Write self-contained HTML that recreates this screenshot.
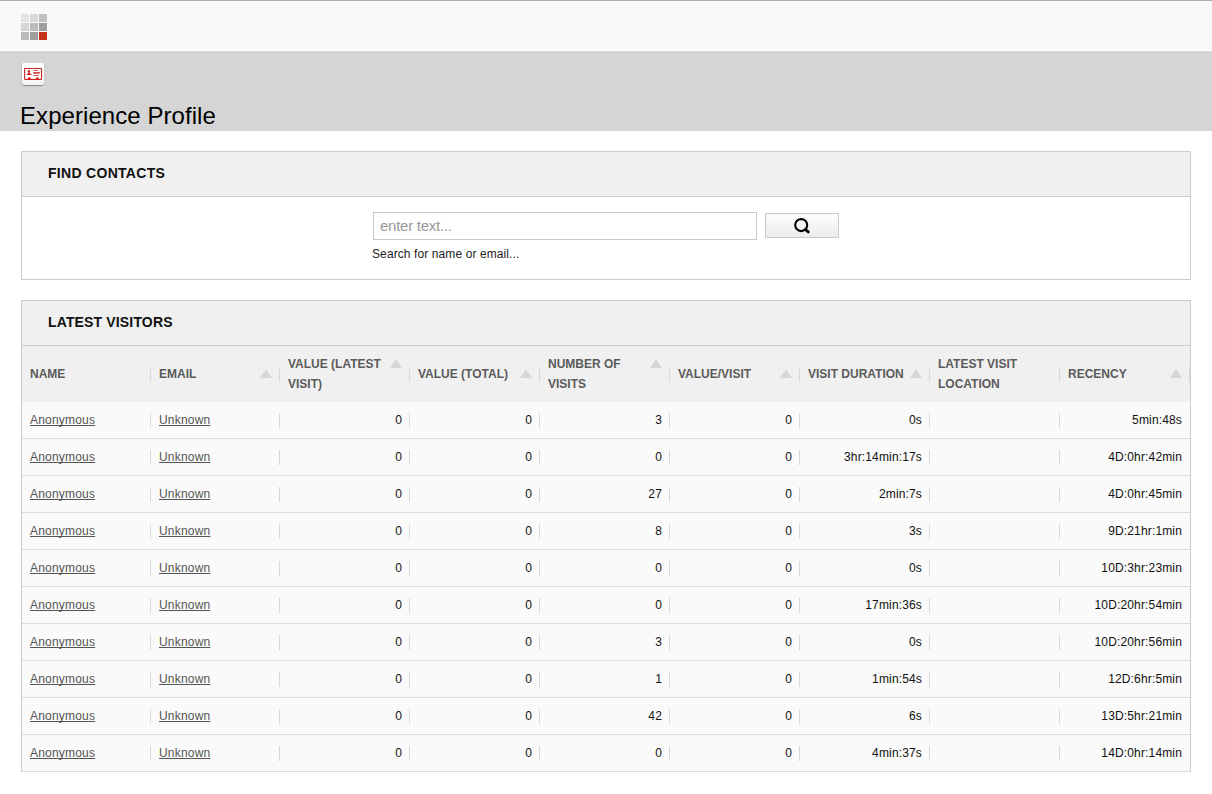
<!DOCTYPE html>
<html><head><meta charset="utf-8">
<style>
* { box-sizing: border-box; }
html,body { margin:0; padding:0; background:#fff; }
body { width:1212px; height:794px; overflow:hidden; font-family:"Liberation Sans", sans-serif; position:relative; }
.topbar { position:absolute; left:0; top:0; width:1212px; height:51px; background:#f9f9f9; border-top:1px solid #ababab; box-shadow: inset 0 1px 0 #fff, inset 0 -1px 0 #fff; }
.grid { position:absolute; left:21px; top:14px; width:27px; height:27px; }
.grid i { position:absolute; width:8px; height:8px; }
.band { position:absolute; left:0; top:51px; width:1212px; height:80px; background:#d5d5d5; }
.appicon { position:absolute; left:22px; top:63px; width:22px; height:22px; background:#fff; border-radius:3px; box-shadow:0 1px 1px rgba(0,0,0,.35), -0.5px 0.5px 0.5px rgba(0,0,0,.12); }
.appicon svg { position:absolute; left:0; top:0; }
.title { position:absolute; left:20px; top:101px; font-size:24px; letter-spacing:0.06px; color:#000; line-height:30px; white-space:nowrap; }
.box { position:absolute; left:21px; width:1170px; border:1px solid #cccccc; background:#fff; }
.boxhead { height:45px; background:#f0f0f0; border-bottom:1px solid #cccccc; font-weight:bold; font-size:14px; color:#111; padding-left:26px; letter-spacing:0.3px; line-height:43px; }
.find { top:151px; height:129px; }
.latest { top:300px; height:472px; }
.inp { position:absolute; left:351px; top:60px; width:384px; height:28px; border:1px solid #c8c8c8; background:#fff; font-size:15px; color:#999; padding-left:6px; line-height:26px; letter-spacing:-0.25px; }
.btn { position:absolute; left:743px; top:61px; width:74px; height:25px; border:1px solid #c9c9c9; background:linear-gradient(#fdfdfd,#ebebeb); }
.btn svg { position:absolute; left:0; top:0; }
.hint { position:absolute; left:350px; top:94px; font-size:12px; color:#222; line-height:16px; white-space:nowrap; letter-spacing:0.1px; }
.thead { height:56px; background:#f0f0f0; display:flex; }
.tr { height:37px; background:#fafafa; border-bottom:1px solid #dcdcdc; display:flex; }
.c { position:relative; flex:none; }
.th { height:56px; display:flex; align-items:center; padding:0 8px; }
.th::after, .td::after { content:""; position:absolute; right:0; width:1px; height:15px; background:#d9d9d9; }
.th::after { top:21px; }
.td:last-child::after { display:none; }
.td::after { top:11px; }
.hw { position:relative; width:100%; }
.ht { display:block; font-size:12px; font-weight:bold; color:#5b5b5b; line-height:20px; max-width:100px; }
.arr { position:absolute; right:0; top:5px; width:0; height:0; border-left:6px solid transparent; border-right:6px solid transparent; border-bottom:9px solid #d6d6d6; }
.td { height:36px; font-size:12px; color:#111; line-height:16px; padding:10px 8px 0 8px; white-space:nowrap; letter-spacing:0.15px; }
.td.r { text-align:right; }
.td a { color:#555; text-decoration:underline; text-decoration-skip-ink:none; letter-spacing:0.2px; }

</style></head><body>
<div class="topbar"></div>
<div class="grid">
<i style="left:0;top:0;background:#e3e3e3"></i><i style="left:9px;top:0;background:#d9d9d9"></i><i style="left:18px;top:0;background:#c0c0c0"></i>
<i style="left:0;top:9px;background:#d6d6d6"></i><i style="left:9px;top:9px;background:#bbbbbb"></i><i style="left:18px;top:9px;background:#9e9e9e"></i>
<i style="left:0;top:18px;background:#bbbbbb"></i><i style="left:9px;top:18px;background:#9e9e9e"></i><i style="left:18px;top:18px;background:#c4341a"></i>
</div>
<div class="band"></div>
<div class="appicon"><svg width="22" height="22" viewBox="0 0 22 22">
<defs><linearGradient id="ig" x1="0" y1="0" x2="0" y2="1"><stop offset="0" stop-color="#ffffff"/><stop offset="0.55" stop-color="#fbfdfd"/><stop offset="1" stop-color="#f0f2f2"/></linearGradient></defs>
<rect x="0" y="0" width="22" height="22" rx="3" fill="url(#ig)"/>
<rect x="2.65" y="5.45" width="16.85" height="11.1" rx="0.6" fill="#fbffff" stroke="#c62424" stroke-width="1.1"/>
<ellipse cx="6.9" cy="8.4" rx="1.15" ry="1.35" fill="#d81a1a"/>
<path d="M6.2 9.4 L7.6 9.4 L7.9 10.4 Q9.6 10.6 9.7 11.9 L4.6 11.9 Q4.7 10.6 5.9 10.4 Z" fill="#d81a1a"/>
<rect x="11.3" y="7.1" width="4.5" height="0.8" fill="#c83030"/>
<rect x="11.3" y="9.1" width="6.5" height="1.6" fill="#cc3a3a"/>
<rect x="11.3" y="12.1" width="5.5" height="0.8" fill="#c83030"/>
<path d="M5.6 16.6 Q5.8 14.2 7.3 14.2 Q8.8 14.2 9.1 16.6 Z" fill="#f00a0a"/>
<path d="M13.7 16.6 Q13.9 14.2 15.3 14.2 Q16.7 14.2 17.0 16.6 Z" fill="#f00a0a"/>
<rect x="3" y="15.9" width="16" height="0.8" fill="#c62424"/>
</svg>
</div>
<div class="title">Experience Profile</div>
<div class="box find">
 <div class="boxhead">FIND CONTACTS</div>
 <div class="inp">enter text...</div>
 <div class="btn"><svg width="74" height="25" viewBox="0 0 74 25">
<circle cx="35.2" cy="11.1" r="6" fill="none" stroke="#000" stroke-width="2.1"/>
<line x1="39.4" y1="15.5" x2="42.3" y2="17.9" stroke="#000" stroke-width="2.9" stroke-linecap="round"/>
</svg>
</div>
 <div class="hint">Search for name or email...</div>
</div>
<div class="box latest">
 <div class="boxhead" style="letter-spacing:0.15px">LATEST VISITORS</div>
 <div class="thead"><div class="c th" style="width:129px"><div class="hw"><span class="ht">NAME</span></div></div><div class="c th" style="width:129px"><div class="hw"><span class="arr"></span><span class="ht">EMAIL</span></div></div><div class="c th" style="width:130px"><div class="hw"><span class="arr"></span><span class="ht">VALUE (LATEST VISIT)</span></div></div><div class="c th" style="width:130px"><div class="hw"><span class="arr"></span><span class="ht">VALUE (TOTAL)</span></div></div><div class="c th" style="width:130px"><div class="hw"><span class="arr"></span><span class="ht">NUMBER OF VISITS</span></div></div><div class="c th" style="width:130px"><div class="hw"><span class="arr"></span><span class="ht">VALUE/VISIT</span></div></div><div class="c th" style="width:130px"><div class="hw"><span class="arr"></span><span class="ht">VISIT DURATION</span></div></div><div class="c th" style="width:130px"><div class="hw"><span class="ht">LATEST VISIT LOCATION</span></div></div><div class="c th" style="width:130px"><div class="hw"><span class="arr"></span><span class="ht">RECENCY</span></div></div></div>
 <div class="tr"><div class="c td l" style="width:129px"><a>Anonymous</a></div><div class="c td l" style="width:129px"><a>Unknown</a></div><div class="c td r" style="width:130px">0</div><div class="c td r" style="width:130px">0</div><div class="c td r" style="width:130px">3</div><div class="c td r" style="width:130px">0</div><div class="c td r" style="width:130px">0s</div><div class="c td r" style="width:130px"></div><div class="c td r" style="width:130px">5min:48s</div></div>
<div class="tr"><div class="c td l" style="width:129px"><a>Anonymous</a></div><div class="c td l" style="width:129px"><a>Unknown</a></div><div class="c td r" style="width:130px">0</div><div class="c td r" style="width:130px">0</div><div class="c td r" style="width:130px">0</div><div class="c td r" style="width:130px">0</div><div class="c td r" style="width:130px">3hr:14min:17s</div><div class="c td r" style="width:130px"></div><div class="c td r" style="width:130px">4D:0hr:42min</div></div>
<div class="tr"><div class="c td l" style="width:129px"><a>Anonymous</a></div><div class="c td l" style="width:129px"><a>Unknown</a></div><div class="c td r" style="width:130px">0</div><div class="c td r" style="width:130px">0</div><div class="c td r" style="width:130px">27</div><div class="c td r" style="width:130px">0</div><div class="c td r" style="width:130px">2min:7s</div><div class="c td r" style="width:130px"></div><div class="c td r" style="width:130px">4D:0hr:45min</div></div>
<div class="tr"><div class="c td l" style="width:129px"><a>Anonymous</a></div><div class="c td l" style="width:129px"><a>Unknown</a></div><div class="c td r" style="width:130px">0</div><div class="c td r" style="width:130px">0</div><div class="c td r" style="width:130px">8</div><div class="c td r" style="width:130px">0</div><div class="c td r" style="width:130px">3s</div><div class="c td r" style="width:130px"></div><div class="c td r" style="width:130px">9D:21hr:1min</div></div>
<div class="tr"><div class="c td l" style="width:129px"><a>Anonymous</a></div><div class="c td l" style="width:129px"><a>Unknown</a></div><div class="c td r" style="width:130px">0</div><div class="c td r" style="width:130px">0</div><div class="c td r" style="width:130px">0</div><div class="c td r" style="width:130px">0</div><div class="c td r" style="width:130px">0s</div><div class="c td r" style="width:130px"></div><div class="c td r" style="width:130px">10D:3hr:23min</div></div>
<div class="tr"><div class="c td l" style="width:129px"><a>Anonymous</a></div><div class="c td l" style="width:129px"><a>Unknown</a></div><div class="c td r" style="width:130px">0</div><div class="c td r" style="width:130px">0</div><div class="c td r" style="width:130px">0</div><div class="c td r" style="width:130px">0</div><div class="c td r" style="width:130px">17min:36s</div><div class="c td r" style="width:130px"></div><div class="c td r" style="width:130px">10D:20hr:54min</div></div>
<div class="tr"><div class="c td l" style="width:129px"><a>Anonymous</a></div><div class="c td l" style="width:129px"><a>Unknown</a></div><div class="c td r" style="width:130px">0</div><div class="c td r" style="width:130px">0</div><div class="c td r" style="width:130px">3</div><div class="c td r" style="width:130px">0</div><div class="c td r" style="width:130px">0s</div><div class="c td r" style="width:130px"></div><div class="c td r" style="width:130px">10D:20hr:56min</div></div>
<div class="tr"><div class="c td l" style="width:129px"><a>Anonymous</a></div><div class="c td l" style="width:129px"><a>Unknown</a></div><div class="c td r" style="width:130px">0</div><div class="c td r" style="width:130px">0</div><div class="c td r" style="width:130px">1</div><div class="c td r" style="width:130px">0</div><div class="c td r" style="width:130px">1min:54s</div><div class="c td r" style="width:130px"></div><div class="c td r" style="width:130px">12D:6hr:5min</div></div>
<div class="tr"><div class="c td l" style="width:129px"><a>Anonymous</a></div><div class="c td l" style="width:129px"><a>Unknown</a></div><div class="c td r" style="width:130px">0</div><div class="c td r" style="width:130px">0</div><div class="c td r" style="width:130px">42</div><div class="c td r" style="width:130px">0</div><div class="c td r" style="width:130px">6s</div><div class="c td r" style="width:130px"></div><div class="c td r" style="width:130px">13D:5hr:21min</div></div>
<div class="tr"><div class="c td l" style="width:129px"><a>Anonymous</a></div><div class="c td l" style="width:129px"><a>Unknown</a></div><div class="c td r" style="width:130px">0</div><div class="c td r" style="width:130px">0</div><div class="c td r" style="width:130px">0</div><div class="c td r" style="width:130px">0</div><div class="c td r" style="width:130px">4min:37s</div><div class="c td r" style="width:130px"></div><div class="c td r" style="width:130px">14D:0hr:14min</div></div>

</div>
</body></html>
